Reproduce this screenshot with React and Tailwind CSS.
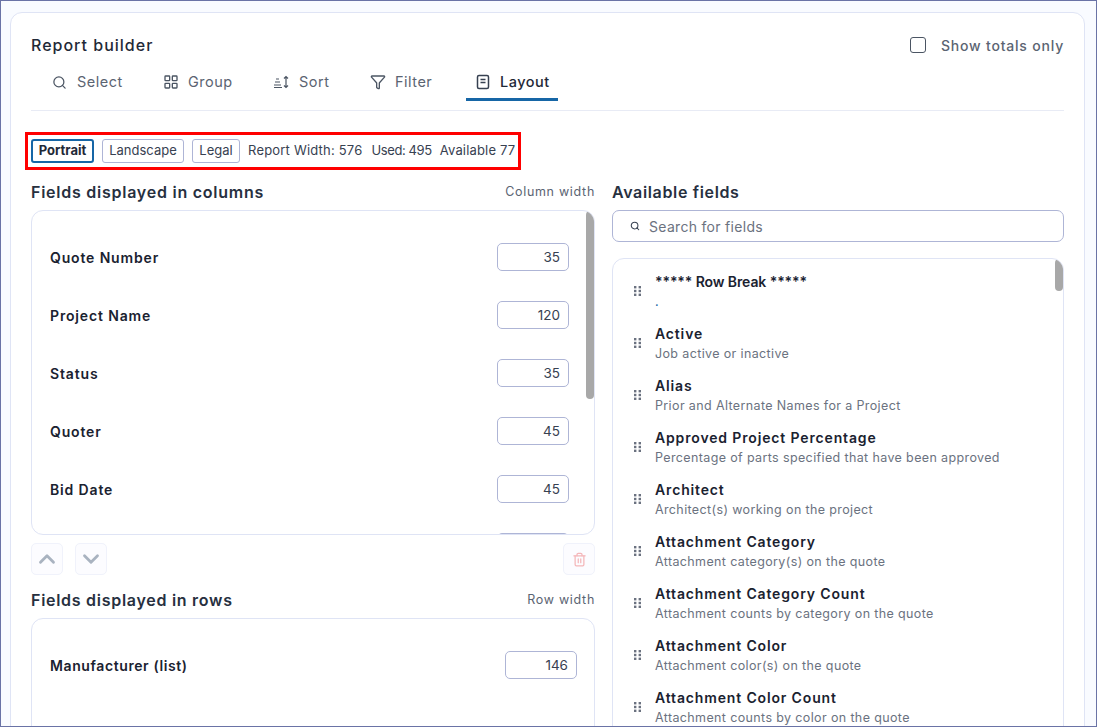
import { ChevronDown, ChevronUp, Funnel, LayoutGrid, Search, Trash2 } from 'lucide-react';

const columnFields = [
  { name: 'Quote Number', width: 35 },
  { name: 'Project Name', width: 120 },
  { name: 'Status', width: 35 },
  { name: 'Quoter', width: 45 },
  { name: 'Bid Date', width: 45 },
  { name: '', width: '' },
];

const availableFields = [
  { name: '***** Row Break *****', note: '.', tall: true },
  { name: 'Active', note: 'Job active or inactive' },
  { name: 'Alias', note: 'Prior and Alternate Names for a Project' },
  { name: 'Approved Project Percentage', note: 'Percentage of parts specified that have been approved' },
  { name: 'Architect', note: 'Architect(s) working on the project' },
  { name: 'Attachment Category', note: 'Attachment category(s) on the quote' },
  { name: 'Attachment Category Count', note: 'Attachment counts by category on the quote' },
  { name: 'Attachment Color', note: 'Attachment color(s) on the quote' },
  { name: 'Attachment Color Count', note: 'Attachment counts by color on the quote' },
];

const SortIcon = () => (
  <svg width="17" height="16" viewBox="0 0 17 16" fill="none" stroke="#4b5563" strokeWidth="1.2" className="shrink-0">
    <path d="M3 5h3M2 8h5M1 11h7M1 13.5h8" />
    <path d="M13 2.5v11M11 4.5l2-2 2 2M11 11.5l2 2 2-2" />
  </svg>
);

const DocIcon = () => (
  <svg width="14" height="16" viewBox="0 0 14 16" fill="none" stroke="#374151" strokeWidth="1.5" className="shrink-0">
    <rect x="1.5" y="1.5" width="11" height="13" rx="1.5" />
    <path d="M4.5 5.5h5M4.5 8.5h5" />
  </svg>
);

const GripIcon = () => (
  <svg width="7" height="10" viewBox="0 0 7 10" fill="#6b7280" className="shrink-0">
    <rect x="0" y="0" width="2.4" height="2.4" />
    <rect x="4.6" y="0" width="2.4" height="2.4" />
    <rect x="0" y="3.8" width="2.4" height="2.4" />
    <rect x="4.6" y="3.8" width="2.4" height="2.4" />
    <rect x="0" y="7.6" width="2.4" height="2.4" />
    <rect x="4.6" y="7.6" width="2.4" height="2.4" />
  </svg>
);

const Tab = ({ icon, label, active, className }) => (
  <div className={`flex h-[38px] items-center border-b-[3px] px-[10px] pt-[3px] text-[14.5px] tracking-[0.5px] ${active ? 'border-[#1666a6] font-medium text-[#1f2937]' : 'border-transparent text-[#5b6472]'} ${className}`}>
    {icon}
    <span>{label}</span>
  </div>
);

const SizeButton = ({ label, active, className }) => (
  <button className={`h-[24px] rounded-[3px] text-[13px] ${active ? 'border-2 border-[#1666a6] font-bold text-[#1f2937]' : 'border border-[#aeb5d6] text-[#374151]'} ${className}`}>
    {label}
  </button>
);

const WidthInput = ({ value }) => (
  <div className="flex h-[28px] w-[72px] items-center justify-end rounded-[5px] border border-[#aeb5d6] bg-white pr-2 text-[13.5px] text-[#374151]">
    {value}
  </div>
);

const IconButton = ({ children }) => (
  <button className="flex h-[32px] w-[32px] items-center justify-center rounded-[5px] border border-[#f0f2fb] bg-[#fcfcff]">
    {children}
  </button>
);

export default function App() {
  return (
    <div className="h-[727px] overflow-hidden border border-[#6a73a6] bg-[#f9fbff] pl-[9px] pr-[11px] pt-[11px] font-['Inter',sans-serif]">
      <div className="h-[760px] rounded-t-xl border border-[#dfe4f5] bg-white px-5">
        <div className="h-[50px] pt-[20px]">
          <div className="flex h-[24px] items-center justify-between">
            <h1 className="text-[16px] font-medium tracking-[1px] text-[#1f2937]">Report builder</h1>
            <label className="flex items-center gap-[15px] text-[14px] font-medium tracking-[0.8px] text-[#5b6472]">
              <span className="h-4 w-4 rounded-[3px] border border-[#4b5563]" />
              Show totals only
            </label>
          </div>
        </div>

        <div className="flex gap-[21px] border-b border-[#e8ebf5] pb-[9px] pl-[11px]">
          <Tab icon={<Search size={15} color="#4b5563" className="shrink-0" />} label="Select" className="w-[90px] gap-[10px]" />
          <Tab icon={<LayoutGrid size={16} color="#4b5563" className="shrink-0" />} label="Group" className="w-[89px] gap-[9px]" />
          <Tab icon={<SortIcon />} label="Sort" className="w-[76px] gap-[9px]" />
          <Tab icon={<Funnel size={16} color="#4b5563" className="shrink-0" />} label="Filter" className="w-[85px] gap-[9px]" />
          <Tab icon={<DocIcon />} label="Layout" active className="w-[92px] gap-[10px]" />
        </div>

        <div className="-ml-[6px] mt-[21px] flex h-[38px] w-fit items-center gap-2 border-[3px] border-[#ff0000] px-[3px] text-[13px] text-[#374151]">
          <SizeButton label="Portrait" active className="w-[63px]" />
          <SizeButton label="Landscape" className="w-[82px]" />
          <SizeButton label="Legal" className="w-[48px]" />
          <span className="tracking-[0.2px]">Report Width: 576</span>
          <span className="ml-px tracking-[-0.4px]">Used: 495</span>
          <span className="tracking-[0.17px]">Available 77</span>
        </div>

        <div className="mt-1 flex gap-[17px]">
          <div className="w-[564px] shrink-0">
            <div className="flex h-[36px] items-center justify-between">
              <h2 className="text-[16px] font-semibold tracking-[0.75px] text-[#27303f]">Fields displayed in columns</h2>
              <span className="text-[12.5px] tracking-[0.7px] text-[#5b6472]">Column width</span>
            </div>
            <div className="relative h-[325px] overflow-hidden rounded-xl border border-[#dfe4f5] bg-white pt-[17px]">
              {columnFields.map((field, i) => (
                <div key={i} className="flex h-[58px] items-center justify-between pl-[18px] pr-[25px]">
                  <span className="text-[14px] font-semibold tracking-[0.85px] text-[#1a2230]">{field.name}</span>
                  <WidthInput value={field.width} />
                </div>
              ))}
              <div className="absolute right-0 top-0 h-[188px] w-2 rounded bg-[#a8a8a8]" />
            </div>
            <div className="mt-2 flex h-[32px] items-center gap-3">
              <IconButton><ChevronUp size={26} strokeWidth={2.6} color="#a9b3c0" /></IconButton>
              <IconButton><ChevronDown size={26} strokeWidth={2.6} color="#a9b3c0" /></IconButton>
              <div className="ml-auto">
                <IconButton><Trash2 size={15} color="#f4b6b9" /></IconButton>
              </div>
            </div>
            <div className="mt-[7px] flex h-[36px] items-center justify-between">
              <h2 className="text-[16px] font-semibold tracking-[0.72px] text-[#27303f]">Fields displayed in rows</h2>
              <span className="text-[12.5px] tracking-[0.7px] text-[#5b6472]">Row width</span>
            </div>
            <div className="h-[120px] rounded-t-xl border border-[#dfe4f5] bg-white pt-[17px]">
              <div className="flex h-[58px] items-center justify-between pl-[18px] pr-[17px]">
                <span className="text-[14px] font-semibold tracking-[0.6px] text-[#1a2230]">Manufacturer (list)</span>
                <WidthInput value={146} />
              </div>
            </div>
          </div>

          <div className="min-w-0 flex-1">
            <div className="flex h-[36px] items-center">
              <h2 className="text-[16px] font-semibold tracking-[0.65px] text-[#27303f]">Available fields</h2>
            </div>
            <div className="flex h-[32px] items-center gap-[9px] rounded-[7px] border border-[#aeb5d6] pl-[17px] text-[14px] tracking-[0.3px] text-[#6b7280]">
              <Search size={10} color="#374151" strokeWidth={2.5} />
              Search for fields
            </div>
            <div className="relative mt-4 h-[480px] overflow-hidden rounded-t-xl border border-[#dfe4f5] bg-white pt-[6px]">
              {availableFields.map((field) => (
                <div key={field.name} className="flex h-[52px] items-center gap-[14px] pl-[21px]">
                  <GripIcon />
                  <div>
                    <div className={`text-[14px] font-semibold leading-[20px] ${field.tall ? 'tracking-[-0.1px]' : 'tracking-[0.85px]'} text-[#1a2230]`}>{field.name}</div>
                    <div className={`text-[12.5px] leading-[19px] tracking-[0.37px] ${field.tall ? 'text-[#1666a6]' : 'text-[#6b7280]'}`}>{field.note}</div>
                  </div>
                </div>
              ))}
              <div className="absolute right-0 top-0 h-[32px] w-2 rounded bg-[#a8a8a8]" />
            </div>
          </div>
        </div>
      </div>
    </div>
  );
}
